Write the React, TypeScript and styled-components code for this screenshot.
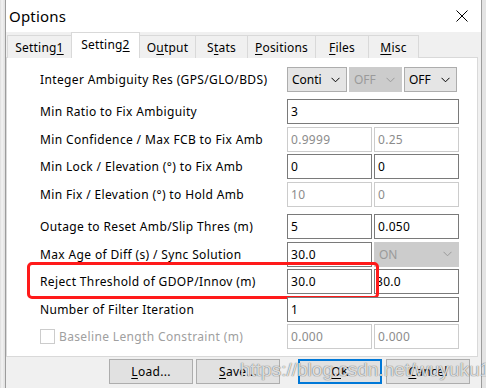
import React from 'react';
import styled, { createGlobalStyle, css } from 'styled-components';

const GlobalStyle = createGlobalStyle`
  html, body {
    margin: 0;
    padding: 0;
    background: #eeeeee;
    overflow: hidden;
  }
  body {
    font-family: "Segoe UI", "Noto Sans", "Liberation Sans", sans-serif;
    font-size: 12px;
    color: #000;
  }
`;

const Backdrop = styled.div`
  width: 486px;
  height: 388px;
  padding-left: 5px;
  box-sizing: border-box;
  background: linear-gradient(90deg, #dcdcdc 0, #f4f4f4 2px, #e4e4e4 4px);
  position: relative;
  overflow: hidden;
`;

const Dialog = styled.div`
  width: 477px;
  height: 100%;
  box-sizing: border-box;
  border-left: 1px solid #9c9c9c;
  border-right: 1px solid #9c9c9c;
  background: #f0f0f0;
  display: flex;
  flex-direction: column;
`;

const TitleBar = styled.div`
  height: 32px;
  background: #fff;
  display: flex;
  align-items: center;
  justify-content: space-between;
  padding: 0 13px 0 3px;
`;

const Title = styled.span`
  font-size: 15px;
  line-height: 20px;
  margin-top: -1px;
  letter-spacing: 0.2px;
`;

const CloseBox = styled.svg`
  width: 12px;
  height: 12px;
  margin-top: -1px;
`;

const Body = styled.div`
  padding: 0 3px 0 0;
  display: flex;
  flex-direction: column;
`;

const TabStrip = styled.div`
  display: flex;
  align-items: flex-end;
  height: 26px;
  padding-left: 1px;
  position: relative;
  z-index: 2;
  margin-bottom: -1px;
`;

const Tab = styled.div<{ active?: boolean; w: number }>`
  width: ${({ w }) => w}px;
  height: 23px;
  box-sizing: border-box;
  border: 1px solid #d9d9d9;
  border-bottom: none;
  margin-left: -1px;
  background: #f0f0f0;
  display: flex;
  align-items: center;
  justify-content: center;
  padding-top: 1px;
  letter-spacing: 0.2px;
  ${({ active }) => active && css`
    height: 26px;
    background: #fff;
    padding-top: 0;
    padding-bottom: 3px;
    position: relative;
    z-index: 1;
  `}
  &:first-child {
    margin-left: 0;
  }
`;

const Key = styled.span`
  text-decoration: underline;
  text-underline-offset: 2px;
`;

const Panel = styled.div`
  background: #fff;
  border: 1px solid #d9d9d9;
  padding: 9px 0 7px 33px;
  display: flex;
  flex-direction: column;
  gap: 7.5px;
`;

const Section = styled.div`
  display: flex;
  flex-direction: column;
  gap: 2.5px;
`;

const Row = styled.div<{ spaced?: boolean }>`
  display: grid;
  grid-template-columns: 247px 172px;
  height: 25px;
  align-items: center;
  position: relative;
  ${({ spaced }) => spaced && css`
    margin-bottom: 4.5px;
  `}
`;

const Label = styled.div<{ disabled?: boolean }>`
  display: flex;
  align-items: center;
  gap: 4px;
  white-space: nowrap;
  letter-spacing: 0.36px;
  color: ${({ disabled }) => (disabled ? '#a0a0a0' : '#000')};
`;

const Check = styled.span`
  width: 15px;
  height: 15px;
  box-sizing: border-box;
  border: 1px solid #cccccc;
  background: #fff;
`;

const Pair = styled.div`
  display: grid;
  grid-template-columns: 85px 85px;
  gap: 2px;
  height: 25px;
`;

const Selects = styled.div`
  display: flex;
  gap: 2px;
  height: 25px;
`;

const Field = styled.div<{ disabled?: boolean; tight?: boolean }>`
  height: 25px;
  box-sizing: border-box;
  border: 1px solid ${({ disabled }) => (disabled ? '#cccccc' : '#7a7a7a')};
  background: #fff;
  padding-left: ${({ tight }) => (tight ? 1 : 3)}px;
  display: flex;
  align-items: center;
  letter-spacing: 0.3px;
  color: ${({ disabled }) => (disabled ? '#8c8c8c' : '#000')};
`;

const Combo = styled.div<{ disabled?: boolean; w: number }>`
  width: ${({ w }) => w}px;
  height: 25px;
  box-sizing: border-box;
  border: 1px solid ${({ disabled }) => (disabled ? '#cccccc' : '#adadad')};
  background: ${({ disabled }) => (disabled ? '#cccccc' : '#e5e5e5')};
  color: ${({ disabled }) => (disabled ? '#9a9a9a' : '#000')};
  display: flex;
  align-items: center;
  justify-content: space-between;
  padding: 0 6px 0 4px;
`;

const Chevron = styled.svg`
  width: 9px;
  height: 6px;
`;

const Highlight = styled.div`
  position: absolute;
  left: -13px;
  top: -7px;
  width: 352px;
  height: 37px;
  box-sizing: border-box;
  border: 3px solid #ff1a1a;
  border-radius: 5px;
  pointer-events: none;
`;

const ButtonBar = styled.div`
  display: flex;
  padding: 2px 8px 0 0;
  justify-content: flex-end;
`;

const Button = styled.div<{ focused?: boolean; gapLeft: number }>`
  width: 84px;
  height: 25px;
  box-sizing: border-box;
  margin-left: ${({ gapLeft }) => gapLeft}px;
  border: 1px solid #adadad;
  background: #e1e1e1;
  display: flex;
  align-items: center;
  justify-content: center;
  letter-spacing: 0.3px;
  ${({ focused }) => focused && css`
    border: 2px solid #0078d7;
  `}
`;

const Watermark = styled.div`
  position: absolute;
  left: 240px;
  top: 359px;
  font-family: "Liberation Sans", Arial, sans-serif;
  font-size: 19px;
  color: rgba(255, 255, 255, 0.8);
  text-shadow: 0 0 1px rgba(60, 60, 60, 0.7), 0 0 1px rgba(60, 60, 60, 0.5);
  white-space: nowrap;
  pointer-events: none;
`;

const ChevronIcon = () => (
  <Chevron viewBox="0 0 9 6">
    <path d="M0.5 0.8 L4.5 4.8 L8.5 0.8" fill="none" stroke="currentColor" strokeWidth="1" />
  </Chevron>
);

const tabs: { label: React.ReactNode; w: number; active?: boolean }[] = [
  { label: <>Setting<Key>1</Key></>, w: 65 },
  { label: <>Setting<Key>2</Key></>, w: 69, active: true },
  { label: <>O<Key>u</Key>tput</>, w: 57 },
  { label: <>S<Key>t</Key>ats</>, w: 53 },
  { label: <><Key>P</Key>ositions</>, w: 69 },
  { label: <><Key>F</Key>iles</>, w: 54 },
  { label: <><Key>M</Key>isc</>, w: 51 },
];

export default function App() {
  return (
    <>
      <GlobalStyle />
      <Backdrop>
        <Dialog>
          <TitleBar>
            <Title>Options</Title>
            <CloseBox viewBox="0 0 12 12">
              <path d="M0.5 0.5 L11.5 11.5 M11.5 0.5 L0.5 11.5" stroke="#000" strokeWidth="1" />
            </CloseBox>
          </TitleBar>
          <Body>
            <TabStrip>
              {tabs.map((t, i) => (
                <Tab key={i} w={t.w} active={t.active}>{t.label}</Tab>
              ))}
            </TabStrip>
            <Panel>
              <Section>
                <Row spaced>
                  <Label>Integer Ambiguity Res (GPS/GLO/BDS)</Label>
                  <Selects>
                    <Combo w={60}>Conti<ChevronIcon /></Combo>
                    <Combo w={53} disabled>OFF<ChevronIcon /></Combo>
                    <Combo w={53}>OFF<ChevronIcon /></Combo>
                  </Selects>
                </Row>
                <Row>
                  <Label>Min Ratio to Fix Ambiguity</Label>
                  <Field>3</Field>
                </Row>
                <Row>
                  <Label>Min Confidence / Max FCB to Fix Amb</Label>
                  <Pair>
                    <Field disabled>0.9999</Field>
                    <Field disabled>0.25</Field>
                  </Pair>
                </Row>
                <Row>
                  <Label>Min Lock / Elevation (°) to Fix Amb</Label>
                  <Pair>
                    <Field>0</Field>
                    <Field>0</Field>
                  </Pair>
                </Row>
                <Row>
                  <Label>Min Fix / Elevation (°) to Hold Amb</Label>
                  <Pair>
                    <Field disabled>10</Field>
                    <Field disabled>0</Field>
                  </Pair>
                </Row>
              </Section>
              <Section>
                <Row>
                  <Label>Outage to Reset Amb/Slip Thres (m)</Label>
                  <Pair>
                    <Field>5</Field>
                    <Field>0.050</Field>
                  </Pair>
                </Row>
                <Row>
                  <Label>Max Age of Diff (s) / Sync Solution</Label>
                  <Pair>
                    <Field>30.0</Field>
                    <Combo w={85} disabled>ON<ChevronIcon /></Combo>
                  </Pair>
                </Row>
                <Row>
                  <Label>Reject Threshold of GDOP/Innov (m)</Label>
                  <Pair>
                    <Field>30.0</Field>
                    <Field tight>30.0</Field>
                  </Pair>
                  <Highlight />
                </Row>
                <Row>
                  <Label>Number of Filter Iteration</Label>
                  <Field>1</Field>
                </Row>
                <Row>
                  <Label disabled><Check />Baseline Length Constraint (m)</Label>
                  <Pair>
                    <Field disabled>0.000</Field>
                    <Field disabled>0.000</Field>
                  </Pair>
                </Row>
              </Section>
            </Panel>
            <ButtonBar>
              <Button gapLeft={0}><Key>L</Key>oad...</Button>
              <Button gapLeft={3}><Key>S</Key>ave...</Button>
              <Button gapLeft={18} focused><Key>O</Key>K</Button>
              <Button gapLeft={4}><Key>C</Key>ancel</Button>
            </ButtonBar>
          </Body>
        </Dialog>
        <Watermark>https://blog.csdn.net/wuyuku123</Watermark>
      </Backdrop>
    </>
  );
}
